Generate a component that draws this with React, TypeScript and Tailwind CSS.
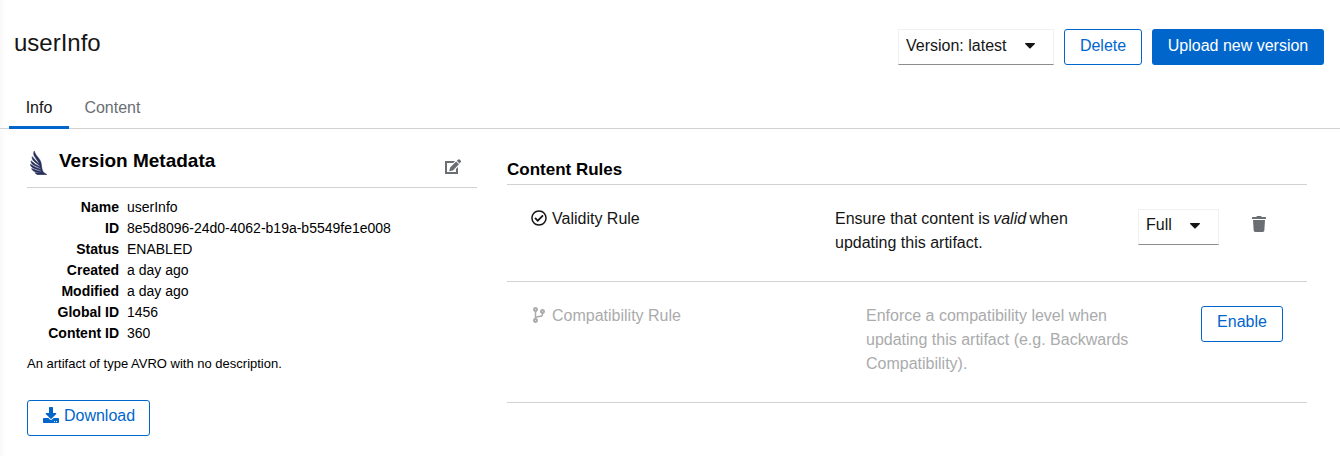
import React from "react";
import { FaCodeBranch, FaDownload, FaRegCheckCircle, FaTrash } from "react-icons/fa";

const metadata: [string, string][] = [
  ["Name", "userInfo"],
  ["ID", "8e5d8096-24d0-4062-b19a-b5549fe1e008"],
  ["Status", "ENABLED"],
  ["Created", "a day ago"],
  ["Modified", "a day ago"],
  ["Global ID", "1456"],
  ["Content ID", "360"],
];

function WingLogo() {
  return (
    <svg className="h-6 w-[17px]" viewBox="0 0 17 24" fill="#262f5a" stroke="#262f5a" strokeWidth="0.5">
      <path d="M4.2 0C3.2 2.2 3.6 4.2 4.8 5.8L8.6 11.6L9.2 13.2L5.6 9.6L2.2 5.6C1.8 7.4 2.6 9 4 10.2L9.6 14.8L9.9 15.8L5.6 13.4L1 9.8C.9 11.6 1.8 13 3.6 14L10.2 17.3L10.6 18.3L5.6 16.3L.3 13.3C.6 15.4 2 16.6 4.2 17.5L11 19.7L11.6 20.5L7.2 19.6L1.6 17.5C2.2 19.4 3.8 20.5 6 21.1L11 22.1L5 21.7C6 23.2 7.4 23.7 9.4 23.8H16.9C16.2 22.8 14.4 22.2 13.2 21C11.6 18.6 11.8 14.6 10.9 11.2C9.9 7.4 5.6 4.8 4.2 0Z" />
    </svg>
  );
}

function EditIcon() {
  return (
    <svg className="h-4 w-4" viewBox="0 0 16 16" fill="#6a6e73">
      <path d="M0 2H10L8.2 4H2V13H11V10L13 8V15H0Z" />
      <path d="M4.2 12.2L5.1 8.5L11.1 2.4L14 5.3L7.9 11.4ZM11.8 1.8L13.2.5Q13.9-.1 14.6.5L15.8 1.7Q16.4 2.4 15.8 3.1L14.5 4.6Z" />
    </svg>
  );
}

function CaretIcon() {
  return (
    <svg className="mt-[13px] h-1.5 w-[10px]" viewBox="0 0 10 6" fill="currentColor">
      <path d="M.6 0H9.4Q10.3.2 9.8 1L5.6 5.3Q5 5.8 4.4 5.3L.2 1Q-.3.2.6 0Z" />
    </svg>
  );
}

function Select({ label, className }: { label: string; className: string }) {
  return (
    <button
      className={
        "flex h-9 items-start justify-between border border-[#f0f0f0] border-b-[#8a8d90] pl-[7px] text-base text-[#151515] " +
        className
      }
    >
      <span>{label}</span>
      <CaretIcon />
    </button>
  );
}

function OutlineButton({ children, className }: { children: React.ReactNode; className: string }) {
  return (
    <button
      className={
        "flex h-9 items-start justify-center rounded-[3px] border border-[#0066cc] text-base text-[#0066cc] " +
        className
      }
    >
      {children}
    </button>
  );
}

export default function App() {
  return (
    <div className="h-[456px] w-[1340px] overflow-hidden bg-[linear-gradient(to_right,#f9f9f9,#ffffff_6px)] font-['Liberation_Sans',Arial,sans-serif] text-[#151515]">
      <header className="flex h-[89px] items-start justify-between pr-4 pl-[14px] pt-[29px]">
        <h1 className="text-2xl leading-[27px]">userInfo</h1>
        <div className="flex">
          <Select label="Version: latest" className="w-[156px] pr-[18px] leading-[31px]" />
          <OutlineButton className="ml-[10px] w-[78px] leading-[31px]">Delete</OutlineButton>
          <button className="ml-[10px] h-9 w-[172px] rounded-[3px] bg-[#0066cc] pb-[3px] text-base leading-[33px] text-white">
            Upload new version
          </button>
        </div>
      </header>

      <nav className="flex h-10 border-b border-[#d2d2d2] pl-[9px] text-base leading-[37px]">
        <button className="-mb-px flex h-10 w-[60px] items-start justify-center border-b-3 border-[#0066cc]">Info</button>
        <button className="flex h-10 items-start px-[15.4px] text-[#6a6e73]">Content</button>
      </nav>

      <main className="flex pl-[27px]">
        <section className="w-[450px] text-black">
          <div className="flex h-[59px] items-start border-b border-[#d2d2d2] pl-[3px]">
            <div className="mt-[22px]">
              <WingLogo />
            </div>
            <h2 className="ml-3 mt-5 flex-1 text-[19px] leading-6 font-bold">Version Metadata</h2>
            <div className="mt-[30px] mr-4">
              <EditIcon />
            </div>
          </div>
          <dl className="mt-[9px] text-sm leading-[21px]">
            {metadata.map(([name, value]) => (
              <div key={name} className="flex gap-2">
                <dt className="w-[92px] text-right font-bold">{name}</dt>
                <dd>{value}</dd>
              </div>
            ))}
          </dl>
          <p className="mt-[10px] text-[13px] leading-5">An artifact of type AVRO with no description.</p>
          <OutlineButton className="mt-[26px] w-[123px] gap-[5px] pl-px leading-[29px]">
            <FaDownload className="mt-1.5 h-4 w-4" />
            <span>Download</span>
          </OutlineButton>
        </section>

        <section className="ml-[30px] w-[800px]">
          <h2 className="h-14 border-b border-[#d2d2d2] pt-[29px] text-[17px] leading-6 font-bold text-black">Content Rules</h2>
          <div className="flex h-[97px] items-start border-b border-[#d2d2d2] pt-[22px] pl-6 leading-6">
            <div className="flex w-[304px] gap-[5px]">
              <FaRegCheckCircle className="mt-[3px] h-4 w-4" />
              <span>Validity Rule</span>
            </div>
            <p className="w-[263px]">
              Ensure that content is <em className="-mr-px -ml-px">valid</em> when updating this artifact.
            </p>
            <Select label="Full" className="mt-0.5 ml-10 w-[81px] pr-[18px] leading-[29px]" />
            <FaTrash className="mt-[9px] ml-[33px] h-4 w-[14px] text-[#6a6e73]" />
          </div>
          <div className="flex h-[121px] items-start border-b border-[#d2d2d2] pt-[22px] pl-6 leading-6">
            <div className="flex w-[335px] gap-[5px] text-[#aaabac]">
              <FaCodeBranch className="mt-[3px] h-4 w-4" />
              <span>Compatibility Rule</span>
            </div>
            <p className="w-[275px] text-[#aaabac]">
              Enforce a compatibility level when updating this artifact (e.g. Backwards Compatibility).
            </p>
            <OutlineButton className="mt-0.5 ml-[60px] w-[82px] leading-[29px]">Enable</OutlineButton>
          </div>
        </section>
      </main>
    </div>
  );
}
